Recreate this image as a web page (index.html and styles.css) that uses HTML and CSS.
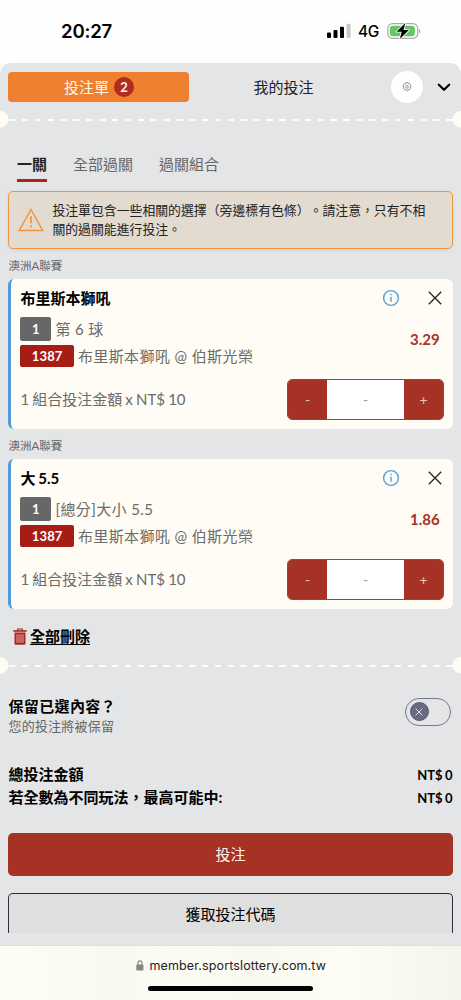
FILE: index.html
```html
<!DOCTYPE html>
<html lang="zh-Hant">
<head>
<meta charset="utf-8">
<meta name="viewport" content="width=device-width">
<title>投注單</title>
<link rel="stylesheet" href="styles.css">
</head>
<body>
<div class="status">
  <span class="time">20:27</span>
  <div class="status-icons">
    <svg class="signal" width="24" height="16" viewBox="0 0 24 16"><rect x="0" y="9.5" width="4" height="5.5" rx="1"/><rect x="6.5" y="7" width="4" height="8" rx="1"/><rect x="13" y="3.8" width="4" height="11.2" rx="1"/><rect x="19.6" y="0.8" width="4" height="14.2" rx="1" fill="#c8c8c8"/></svg>
    <span class="net">4G</span>
    <svg class="battery" width="34" height="18" viewBox="0 0 34 18"><rect x=".8" y="1.7" width="30" height="14.6" rx="4.8" fill="#fff" stroke="#a9a9a9" stroke-width="1.2"/><rect x="2.8" y="3.7" width="25" height="10.6" rx="3" fill="#64c466"/><path d="M32.2 6.8c1.6.7 1.6 3.7 0 4.4z" fill="#a9a9a9"/><path d="M18.3 1 9.5 9.7h5.2L12.8 17 22 8.1h-5.5z" fill="#000" stroke="#fff" stroke-width="1.6" paint-order="stroke" stroke-linejoin="round"/></svg>
  </div>
</div>
<main class="sheet">
  <header class="top">
    <div class="slip-tab"><span class="slip-label">投注單</span><span class="count">2</span></div>
    <div class="mine-tab">我的投注</div>
    <div class="gear"><svg width="10" height="10" viewBox="0 0 10 10" fill="none" stroke="#777" stroke-width=".75" stroke-linejoin="round"><path d="M4.2.6h1.6l.4 1 1-.5 1.1 1.1-.4 1 1 .5v1.6l-1 .5.4 1-1.1 1.1-1-.4-.4 1.1H4.2l-.4-1.1-1 .4-1.1-1.1.4-1-1-.5V3.7l1-.5-.4-1 1.1-1.1 1 .5z"/><ellipse cx="5" cy="4.8" rx="1.2" ry="1.6"/></svg></div>
    <svg class="chevron" width="14" height="10" viewBox="0 0 14 10" fill="none" stroke="#000" stroke-width="2.2" stroke-linecap="round" stroke-linejoin="round"><path d="M1.8 2.7 7 7.8l5.2-5.1"/></svg>
  </header>
  <div class="perforation"></div>
  <nav class="modes"><span class="mode active">一關</span><span class="mode">全部過關</span><span class="mode">過關組合</span></nav>
  <div class="alert">
    <svg width="26" height="24" viewBox="0 0 26 24" fill="none" stroke="#ee963f" stroke-width="1.5"><path d="M13 1.5 24.8 22.6H1.2z"/><path d="M13 8.3v7M13 17.2v2" stroke-width="1.8"/></svg>
    <p>投注單包含一些相關的選擇（旁邊標有色條）。請注意，只有不相<br>關的過關能進行投注。</p>
  </div>
  <div class="league">澳洲A聯賽</div>
  <section class="card">
    <div class="card-head"><h2>布里斯本獅吼</h2>
      <svg class="info" width="18" height="18" viewBox="0 0 18 18" fill="none" stroke="#559edb" stroke-width="1.4"><circle cx="9" cy="9" r="7.4"/><path d="M9 7.8v5M9 4.7v1.6"/></svg>
      <svg class="close" width="14" height="14" viewBox="0 0 14 14" stroke="#222" stroke-width="1.3"><path d="m.8.8 12.4 12.4M13.2.8.8 13.2"/></svg>
    </div>
    <div class="card-mid">
      <div class="picks">
        <div class="pick"><b class="tag gray">1</b><span>第 6 球</span></div>
        <div class="pick"><b class="tag red">1387</b><span>布里斯本獅吼 @ 伯斯光榮</span></div>
      </div>
      <strong class="odds">3.29</strong>
    </div>
    <div class="stake"><span class="stake-label">1 組合投注金額 x NT$ 10</span>
      <div class="stepper"><span class="step">-</span><span class="value">-</span><span class="step">+</span></div>
    </div>
  </section>
  <div class="league">澳洲A聯賽</div>
  <section class="card">
    <div class="card-head"><h2>大 5.5</h2>
      <svg class="info" width="18" height="18" viewBox="0 0 18 18" fill="none" stroke="#559edb" stroke-width="1.4"><circle cx="9" cy="9" r="7.4"/><path d="M9 7.8v5M9 4.7v1.6"/></svg>
      <svg class="close" width="14" height="14" viewBox="0 0 14 14" stroke="#222" stroke-width="1.3"><path d="m.8.8 12.4 12.4M13.2.8.8 13.2"/></svg>
    </div>
    <div class="card-mid">
      <div class="picks">
        <div class="pick"><b class="tag gray">1</b><span>[總分]大小 5.5</span></div>
        <div class="pick"><b class="tag red">1387</b><span>布里斯本獅吼 @ 伯斯光榮</span></div>
      </div>
      <strong class="odds">1.86</strong>
    </div>
    <div class="stake"><span class="stake-label">1 組合投注金額 x NT$ 10</span>
      <div class="stepper"><span class="step">-</span><span class="value">-</span><span class="step">+</span></div>
    </div>
  </section>
  <div class="clear">
    <svg width="14" height="17" viewBox="0 0 14 17" fill="none" stroke="#ac271d"><path d="M.3 3h13.4" stroke-width="1.6"/><path d="M4.7 3V1h4.6v2" stroke-width="1.2"/><path d="M1.5 4.6h11v10.9q0 1.2-1.2 1.2H2.7q-1.2 0-1.2-1.2z" fill="#ac271d" stroke="none"/><path d="M4 6.3v8.5M6 6.3v8.5M8 6.3v8.5M10 6.3v8.5" stroke="#ecc9c5" stroke-width=".8"/></svg>
    <span>全部刪除</span>
  </div>
  <div class="perforation"></div>
  <div class="keep">
    <div><div class="keep-title">保留已選內容？</div><div class="keep-sub">您的投注將被保留</div></div>
    <div class="switch"><span class="knob"><svg width="8" height="8" viewBox="0 0 8 8" stroke="#e4e4ee" stroke-width="1"><path d="m.6.6 6.8 6.8M7.4.6.6 7.4"/></svg></span></div>
  </div>
  <div class="totals">
    <div class="total"><span>總投注金額</span><span class="amount">NT$ 0</span></div>
    <div class="total"><span>若全數為不同玩法，最高可能中:</span><span class="amount">NT$ 0</span></div>
  </div>
  <div class="submit">投注</div>
  <div class="code">獲取投注代碼</div>
</main>
<footer class="browser">
  <div class="address"><svg width="8" height="11" viewBox="0 0 8 11"><rect x=".3" y="4.6" width="7.2" height="6" rx="1" fill="#858585"/><path d="M1.9 5V3.1a2 2.2 0 0 1 4 0V5" fill="none" stroke="#858585" stroke-width="1.1"/></svg><span>member.sportslottery.com.tw</span></div>
  <div class="home"></div>
</footer>
</body>
</html>
```
FILE: styles.css
```css
* { box-sizing: border-box; }
body {
  margin: 0;
  width: 461px;
  height: 1000px;
  overflow: hidden;
  background: #fefefe;
  color: #000;
  font-family: Lato, "Noto Sans CJK TC", sans-serif;
  font-size: 15px;
}
svg { display: block; flex: none; }
.status {
  height: 63px;
  display: flex;
  justify-content: space-between;
  padding: 19px 40px 0 61px;
  font-family: Inter, sans-serif;
}
.time { font-size: 18.6px; font-weight: 600; line-height: 25px; letter-spacing: -.2px; }
.status-icons { display: flex; height: 24px; align-items: center; }
.net { font-size: 15.5px; font-weight: 500; width: 22px; margin: 1px 7px 0 7px; letter-spacing: -.3px; }
.sheet {
  height: 882px;
  background: #e4e5e7;
  border-radius: 11px 11px 0 0;
  overflow: hidden;
}
.top { height: 48px; padding: 0 10px 0 8.4px; display: flex; align-items: center; }
.slip-tab {
  width: 181.5px;
  height: 30px;
  border-radius: 4px;
  background: #ee8030;
  color: #fff8ee;
  display: flex;
  align-items: center;
  justify-content: center;
  gap: 5px;
}
.slip-label { padding-bottom: 2px; }
.count {
  width: 20px;
  height: 20px;
  border-radius: 50%;
  background: #b22b20;
  text-align: center;
  font-size: 13px;
  font-weight: 700;
  line-height: 20px;
}
.mine-tab { width: 201.5px; padding: 0 0 2px 64px; color: #222; }
.gear {
  width: 32px;
  height: 32px;
  border-radius: 50%;
  background: #fff;
  display: grid;
  place-items: center;
}
.chevron { margin-left: 14.5px; }
.perforation {
  height: 17px;
  background:
    radial-gradient(circle at 0 8.3px, #fffcf5 8px, transparent 8.7px),
    radial-gradient(circle at 100% 8.3px, #fffcf5 8px, transparent 8.7px),
    repeating-linear-gradient(90deg, #fffcf5 0 6.6px, transparent 6.6px 12.86px) 8.5px 8px / 444px 2px no-repeat;
}
.modes { height: 63px; padding: 23px 0 0 17px; display: flex; gap: 26px; }
.mode { height: 31px; line-height: 27px; color: #666; }
.active { color: #222; font-weight: 700; border-bottom: 3px solid #ac251c; }
.alert {
  height: 58px;
  margin: 0 8.4px;
  padding-left: 9px;
  border: 1px solid #ee963f;
  border-radius: 5px;
  background: #e4dbd0;
  box-shadow: 0 1px 4px #0001;
  display: flex;
  align-items: center;
  gap: 8px;
}
.alert p { margin: 0; font-size: 12.86px; line-height: 19.3px; white-space: nowrap; text-spacing-trim: space-all; color: #222; }
.league { height: 30px; padding: 6px 8.5px 0; font-size: 11.5px; line-height: 22px; color: #666; }
.card {
  height: 150px;
  margin: 0 8.4px;
  padding: 7px 8.5px 0 9px;
  border-left: 3px solid #4f9bdb;
  border-radius: 6px;
  background: #fffcf5;
}
.card-head { height: 24px; display: flex; align-items: center; }
.card h2 { margin: 0; flex: 1; font-size: 15px; line-height: 24px; word-spacing: -.8px; }
.info { margin-right: 27.5px; }
.close { margin-right: 2.5px; }
.card-mid { height: 69px; padding-top: 7px; display: flex; justify-content: space-between; }
.picks { display: flex; flex-direction: column; gap: 3px; }
.pick { height: 24px; display: flex; align-items: center; gap: 4px; color: #6b6b68; letter-spacing: .4px; white-space: pre; }
.pick span { padding-bottom: 2px; }
.tag { border-radius: 2px; color: #fff; font-size: 13px; text-align: center; letter-spacing: .1px; }
.gray { width: 31px; height: 24px; line-height: 24px; background: #676767; }
.red { width: 53.5px; height: 22px; line-height: 22px; background: #a61d16; }
.odds { padding: 12px 4.5px 0 0; font-size: 15px; line-height: 20px; color: #a83225; }
.stake { display: flex; justify-content: space-between; color: #6b6b68; }
.stake-label { line-height: 40px; word-spacing: -.7px; }
.stepper {
  width: 157px;
  height: 41px;
  border: 1px solid #b23b30;
  border-radius: 5px;
  overflow: hidden;
  display: flex;
  line-height: 39px;
  text-align: center;
}
.step { width: 39px; background: #a63225; color: #e9c5bd; font-size: 14px; }
.value { flex: 1; background: #fff; color: #999; font-size: 14px; }
.clear { height: 47.5px; padding: 7px 12.5px 0; display: flex; align-items: center; gap: 3.5px; font-weight: 700; }
.clear span { line-height: 24px; text-decoration: underline; text-decoration-thickness: 1px; text-underline-offset: 2px; }
.keep { height: 89px; padding: 21px 10.5px 0 8.5px; display: flex; justify-content: space-between; }
.keep-title { line-height: 22px; font-weight: 700; letter-spacing: .35px; }
.keep-sub { line-height: 19px; font-size: 13px; letter-spacing: .2px; color: #666; }
.switch { width: 45.5px; height: 28px; margin-top: 3px; padding: 3.5px; border: 1px solid #77758f; border-radius: 14px; }
.knob { width: 19px; height: 19px; border-radius: 50%; border: 1px solid #56557b; background: #6b6a82; display: grid; place-items: center; }
.total { height: 23px; line-height: 23px; padding: 0 8.5px; display: flex; justify-content: space-between; font-weight: 700; }
.amount { font-size: 13px; word-spacing: -.8px; line-height: 25px; }
.submit {
  height: 43px;
  margin: 24.5px 8.4px 17px;
  border-radius: 5px;
  background: #a63225;
  color: #fff5ef;
  line-height: 42px;
  text-align: center;
}
.code {
  height: 40px;
  margin: 0 8.4px;
  border: 1px solid #2c2e39;
  border-bottom: 0;
  border-radius: 5px 5px 0 0;
  background: #dfdfdf;
  line-height: 40px;
  text-align: center;
}
.browser { height: 55px; border-top: 1px solid #dedede; background: linear-gradient(90deg, #fffef6, #f9f8f1 25%, #fdfcf4 40%, #faf9f0 55%, #fefdf5 75%, #f6f5ed); }
.address { height: 38px; padding-left: 135.5px; display: flex; align-items: center; gap: 6px; font-family: Inter, sans-serif; font-size: 12.5px; letter-spacing: .13px; color: #222; }
.home { width: 165px; height: 5px; margin: 2px 0 0 148px; border-radius: 3px; background: #000; }
```
